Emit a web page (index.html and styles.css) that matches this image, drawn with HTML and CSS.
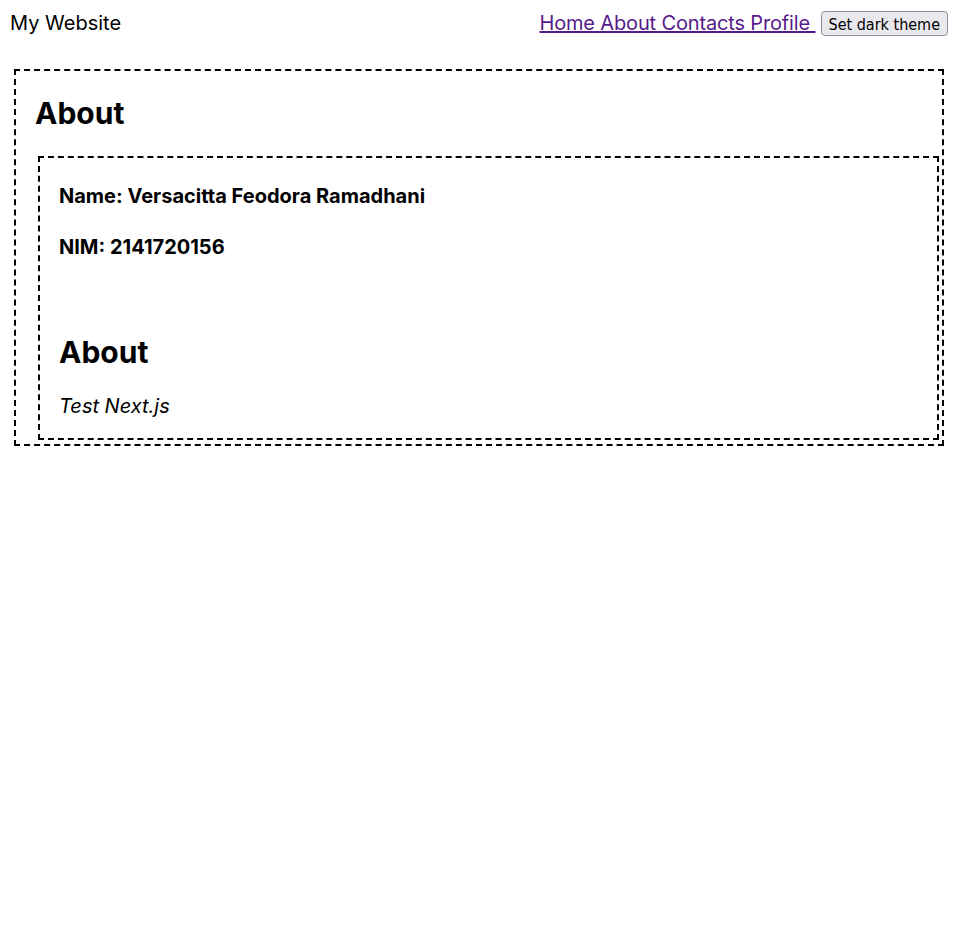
FILE: index.html
```html
<!DOCTYPE html>
<html lang="en">
<head>
  <meta charset="UTF-8">
  <meta name="viewport" content="width=device-width, initial-scale=1.0">
  <title>My Website</title>
  <link rel="stylesheet" href="styles.css">
</head>
<body>
  <nav class="navbar">
    <div class="brand">My Website</div>
    <div class="nav-right">
      <a href="#" class="nav-links">Home About Contacts Profile&nbsp;</a>
      <button class="theme-btn">Set dark theme</button>
    </div>
  </nav>

  <main class="page">
    <h1 class="page-title">About</h1>
    <section class="card">
      <p class="field">Name: Versacitta Feodora Ramadhani</p>
      <p class="field">NIM: 2141720156</p>
      <h2 class="card-title">About</h2>
      <p class="desc">Test Next.js</p>
    </section>
  </main>
</body>
</html>
```

FILE: styles.css
```css
* {
  box-sizing: border-box;
  margin: 0;
  padding: 0;
}

body {
  background: #fff;
  color: #000;
  font-family: 'Inter', sans-serif;
}

.navbar {
  display: flex;
  justify-content: space-between;
  align-items: flex-start;
  padding: 11px 9px 0 10px;
  height: 69px;
}

.brand {
  font-size: 20px;
  line-height: 24px;
}

.nav-right {
  display: flex;
  align-items: flex-start;
  gap: 5px;
}

.nav-links {
  color: #551a8b;
  font-size: 20px;
  line-height: 24px;
  letter-spacing: -0.15px;
}

.theme-btn {
  font-family: 'DejaVu Sans Condensed', 'DejaVu Sans', sans-serif;
  font-stretch: condensed;
  font-size: 16px;
  padding: 3px 7px 2px;
  height: 25px;
  border: 1px solid #8f8f9d;
  border-radius: 4px;
  background: #e9e9ed;
  color: #000;
}

.page {
  margin: 0 13px 0 14px;
  border: 2px dashed #000;
  padding: 24px 3px 4px 19px;
}

.page-title {
  font-size: 30px;
  line-height: 36px;
  font-weight: 700;
  margin-bottom: 25px;
}

.card {
  margin-left: 3px;
  border: 2px dashed #000;
  padding: 26px 19px 20px 19px;
}

.field {
  font-size: 20px;
  font-weight: 700;
  line-height: 24px;
  margin-bottom: 27px;
}

.card-title {
  font-size: 30px;
  line-height: 36px;
  font-weight: 700;
  margin-top: 75px;
  margin-bottom: 24px;
}

.desc {
  font-size: 20px;
  font-style: italic;
  line-height: 24px;
}
```
